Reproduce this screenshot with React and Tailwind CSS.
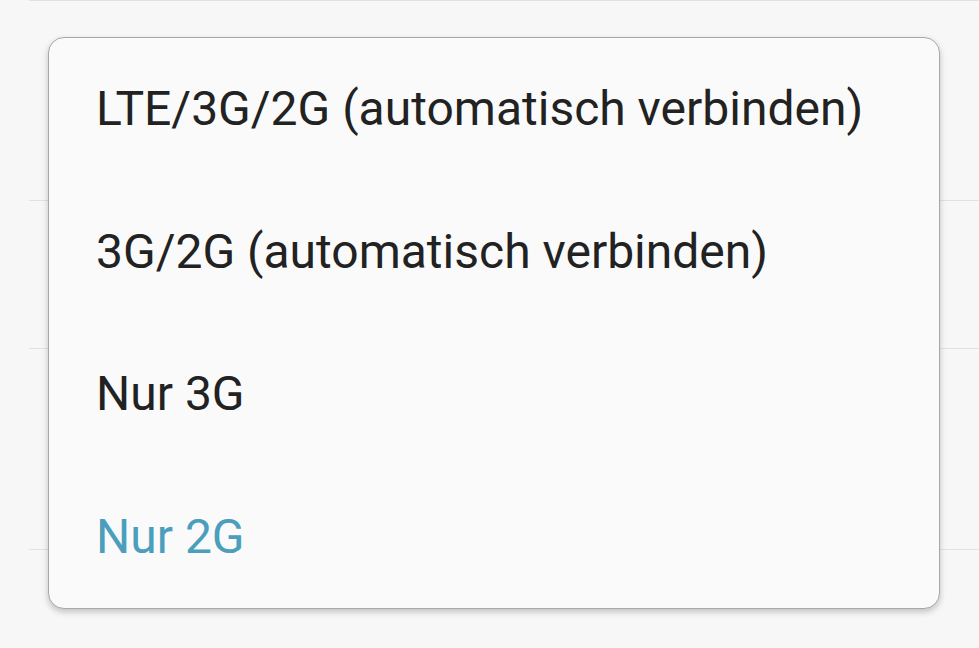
import React from "react";

const items = [
  { label: "LTE/3G/2G (automatisch verbinden)", active: false },
  { label: "3G/2G (automatisch verbinden)", active: false },
  { label: "Nur 3G", active: false },
  { label: "Nur 2G", active: true },
];

export default function App() {
  return (
    <div
      className="relative w-[979px] h-[648px] overflow-hidden bg-[#f7f7f7]"
      style={{ fontFamily: "Roboto, 'Noto Sans', sans-serif" }}
    >
      {/* background list */}
      <div className="flex flex-col">
        <div className="h-[200px] ml-[29px] border-t border-[#e2e2e2]" />
        <div className="h-[148px] ml-[29px] border-t border-[#e2e2e2]" />
        <div className="h-[201px] ml-[29px] border-t border-[#e2e2e2]" />
        <div className="h-[99px] ml-[29px] border-t border-[#e2e2e2]" />
      </div>

      {/* popup menu */}
      <div className="absolute left-[48px] top-[37px] w-[892px] h-[572px] rounded-[16px] bg-[#fafafa] border border-[#a8a8a8] shadow-[0_3px_6px_rgba(0,0,0,0.22)] overflow-hidden flex flex-col">
        {items.map((it) => (
          <div
            key={it.label}
            className={`flex-1 flex items-center pl-[47px] text-[48px] leading-none ${
              it.active ? "text-[#4b9fbd]" : "text-[#222222]"
            }`}
          >
            {it.label}
          </div>
        ))}
      </div>
    </div>
  );
}
